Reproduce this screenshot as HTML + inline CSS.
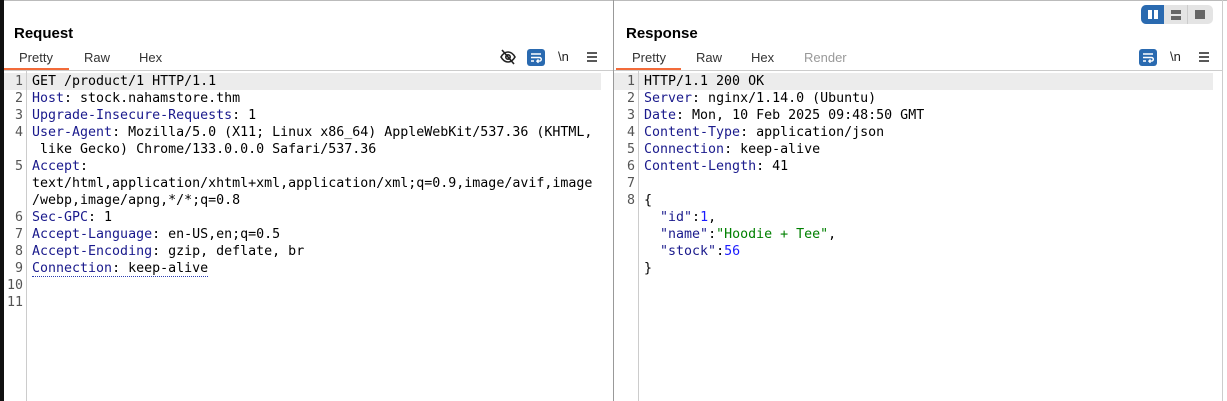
<!DOCTYPE html>
<html><head><meta charset="utf-8">
<style>
*{margin:0;padding:0;box-sizing:border-box}
body{width:1227px;height:401px;background:#fff;position:relative;overflow:hidden;font-family:"Liberation Sans",sans-serif;color:#000}
.abs{position:absolute}
.title{font-weight:bold;font-size:15px;top:25px}
.tab{font-size:13px;top:50px;color:#333}
.code{font-family:"DejaVu Sans Mono","Liberation Mono",monospace;font-size:13.3px;line-height:17px;white-space:pre;color:#000}
.ln{font-family:"DejaVu Sans Mono","Liberation Mono",monospace;font-size:13.3px;line-height:17px;white-space:pre;color:#555;text-align:right}
.k{color:#1a1a8c}
.n{color:#1a1aff}
.s{color:#008000}
.dot{border-bottom:1.5px dotted #2a3db0}
</style></head><body>
<div class="abs" style="left:0;top:0;width:4px;height:401px;background:#111"></div>
<div class="abs" style="left:4px;top:0;width:1223px;height:1px;background:#bbb"></div>
<div class="abs" style="left:613px;top:0;width:1px;height:401px;background:#999"></div>
<div class="abs" style="left:1222px;top:0;width:1px;height:401px;background:#ccc"></div>

<div class="abs title" style="left:14px">Request</div>
<div class="abs tab" style="left:19px">Pretty</div>
<div class="abs tab" style="left:84px">Raw</div>
<div class="abs tab" style="left:139px">Hex</div>
<div class="abs" style="left:4px;top:70px;width:609px;height:1px;background:#ccc"></div>
<div class="abs" style="left:4px;top:68px;width:65px;height:2px;background:#f26b3a"></div>
<svg class="abs" style="left:499px;top:48px" width="18" height="18" viewBox="0 0 18 18" fill="none" stroke="#222" stroke-width="1.6"><path d="M2 9c2-3.5 4.5-5 7-5s5 1.5 7 5c-2 3.5-4.5 5-7 5s-5-1.5-7-5z"/><circle cx="9" cy="9" r="2.2"/><path d="M3 2l12 14"/></svg>
<div class="abs" style="left:527px;top:49px;width:18px;height:17px;background:#2a6ab0;border-radius:3px"></div>
<svg class="abs" style="left:527px;top:49px" width="18" height="17" viewBox="0 0 18 17" fill="none" stroke="#fff" stroke-width="1.4"><path d="M4 5h10M4 8.5h8.5a1.8 1.8 0 010 3.6H10M11.5 10.5l-1.6 1.6 1.6 1.6M4 12h3"/></svg>
<div class="abs" style="left:558px;top:49px;font-size:13px;color:#222">\n</div>
<svg class="abs" style="left:586px;top:51px" width="12" height="12" viewBox="0 0 12 12" stroke="#222" stroke-width="1.5"><path d="M1 2h10M1 6h10M1 10h10"/></svg>

<div class="abs" style="left:4px;top:73px;width:597px;height:17px;background:#ececec"></div>
<div class="abs" style="left:26px;top:71px;width:1px;height:330px;background:#ccc"></div>
<div class="abs ln" style="left:4px;top:73px;width:19px">1
2
3
4

5


6
7
8
9
10
11</div>
<div class="abs code" style="left:32px;top:73px">GET /product/1 HTTP/1.1
<span class="k">Host</span>: stock.nahamstore.thm
<span class="k">Upgrade-Insecure-Requests</span>: 1
<span class="k">User-Agent</span>: Mozilla/5.0 (X11; Linux x86_64) AppleWebKit/537.36 (KHTML,
 like Gecko) Chrome/133.0.0.0 Safari/537.36
<span class="k">Accept</span>:
text/html,application/xhtml+xml,application/xml;q=0.9,image/avif,image
/webp,image/apng,*/*;q=0.8
<span class="k">Sec-GPC</span>: 1
<span class="k">Accept-Language</span>: en-US,en;q=0.5
<span class="k">Accept-Encoding</span>: gzip, deflate, br
<span class="dot"><span class="k">Connection</span>: keep-alive</span></div>

<div class="abs title" style="left:626px">Response</div>
<div class="abs tab" style="left:632px">Pretty</div>
<div class="abs tab" style="left:696px">Raw</div>
<div class="abs tab" style="left:751px">Hex</div>
<div class="abs tab" style="left:804px;color:#999">Render</div>
<div class="abs" style="left:614px;top:70px;width:608px;height:1px;background:#ccc"></div>
<div class="abs" style="left:616px;top:68px;width:65px;height:2px;background:#f26b3a"></div>
<div class="abs" style="left:1139px;top:49px;width:18px;height:17px;background:#2a6ab0;border-radius:3px"></div>
<svg class="abs" style="left:1139px;top:49px" width="18" height="17" viewBox="0 0 18 17" fill="none" stroke="#fff" stroke-width="1.4"><path d="M4 5h10M4 8.5h8.5a1.8 1.8 0 010 3.6H10M11.5 10.5l-1.6 1.6 1.6 1.6M4 12h3"/></svg>
<div class="abs" style="left:1170px;top:49px;font-size:13px;color:#222">\n</div>
<svg class="abs" style="left:1198px;top:51px" width="12" height="12" viewBox="0 0 12 12" stroke="#222" stroke-width="1.5"><path d="M1 2h10M1 6h10M1 10h10"/></svg>

<div class="abs" style="left:1141px;top:5px;width:72px;height:19px;background:#e4e4e4;border-radius:5px"></div>
<div class="abs" style="left:1141px;top:5px;width:23px;height:19px;background:#2a6ab0;border-radius:5px 0 0 5px"></div>
<div class="abs" style="left:1148px;top:10px;width:4px;height:9px;background:#fff"></div>
<div class="abs" style="left:1154px;top:10px;width:4px;height:9px;background:#fff"></div>
<div class="abs" style="left:1187px;top:5px;width:1px;height:19px;background:#ccc"></div>
<div class="abs" style="left:1171px;top:10px;width:10px;height:4px;background:#666"></div>
<div class="abs" style="left:1171px;top:16px;width:10px;height:4px;background:#666"></div>
<div class="abs" style="left:1195px;top:10px;width:10px;height:9px;background:#666"></div>

<div class="abs" style="left:614px;top:73px;width:599px;height:17px;background:#ececec"></div>
<div class="abs" style="left:638px;top:71px;width:1px;height:330px;background:#ccc"></div>
<div class="abs ln" style="left:614px;top:73px;width:21px">1
2
3
4
5
6
7
8</div>
<div class="abs code" style="left:644px;top:73px">HTTP/1.1 200 OK
<span class="k">Server</span>: nginx/1.14.0 (Ubuntu)
<span class="k">Date</span>: Mon, 10 Feb 2025 09:48:50 GMT
<span class="k">Content-Type</span>: application/json
<span class="k">Connection</span>: keep-alive
<span class="k">Content-Length</span>: 41

{
  <span class="k">"id"</span>:<span class="n">1</span>,
  <span class="k">"name"</span>:<span class="s">"Hoodie + Tee"</span>,
  <span class="k">"stock"</span>:<span class="n">56</span>
}</div>
</body></html>
